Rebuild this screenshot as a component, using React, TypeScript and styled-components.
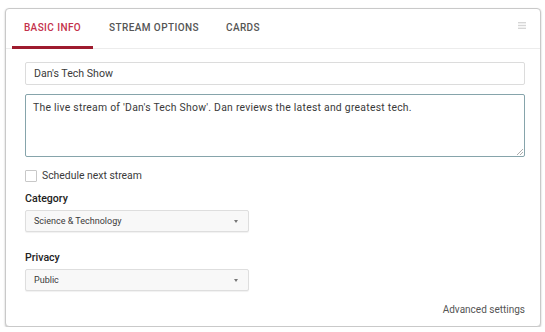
import styled, { createGlobalStyle } from "styled-components";

const GlobalStyle = createGlobalStyle`
  body {
    margin: 0;
    background: #ffffff;
    font-family: Roboto, "Liberation Sans", Arial, sans-serif;
  }
`;

const Card = styled.section`
  box-sizing: border-box;
  margin: 8px 4px 0 5px;
  width: 536px;
  height: 319px;
  border: 1px solid #c9c9c9;
  border-radius: 4px;
  box-shadow: 0 1px 2px rgba(0, 0, 0, 0.25);
  background: #ffffff;
  display: flex;
  flex-direction: column;
`;

const TabBar = styled.nav`
  height: 39px;
  display: flex;
  align-items: stretch;
  padding-left: 6px;
  padding-right: 14px;
  border-bottom: 1px solid #ececec;
`;

const Tab = styled.div<{ $active?: boolean; $width: number }>`
  width: ${(p) => p.$width}px;
  display: flex;
  align-items: center;
  justify-content: center;
  font-size: 10px;
  font-weight: 500;
  letter-spacing: 0.4px;
  color: ${(p) => (p.$active ? "#c4314b" : "#555")};
  border-bottom: 3px solid ${(p) => (p.$active ? "#9e1b2e" : "transparent")};
  margin-bottom: -1px;
`;

const Spacer = styled.div`
  flex: 1;
`;

const MenuIcon = styled.div`
  display: flex;
  align-items: center;
  padding-bottom: 6px;
`;

const Body = styled.div`
  flex: 1;
  display: flex;
  flex-direction: column;
  padding: 13px 15px 0 19px;
`;

const TextInput = styled.div`
  box-sizing: border-box;
  height: 23px;
  border: 1px solid #dcdcdc;
  border-radius: 2px;
  display: flex;
  align-items: center;
  padding-left: 8px;
  font-size: 10.6px;
  color: #3a3a3a;
`;

const TextArea = styled.div`
  position: relative;
  box-sizing: border-box;
  margin-top: 9px;
  height: 63px;
  border: 1px solid #86a4ab;
  border-radius: 2px;
  padding: 6px 7px;
  font-size: 10.4px;
  letter-spacing: 0.25px;
  color: #3a3a3a;
`;

const Grip = styled.svg`
  position: absolute;
  right: 1px;
  bottom: 1px;
`;

const CheckRow = styled.label`
  margin-top: 12px;
  display: flex;
  align-items: center;
  gap: 5px;
  font-size: 10.4px;
  color: #3a3a3a;
`;

const Box = styled.span`
  box-sizing: border-box;
  width: 12px;
  height: 12px;
  border: 1px solid #c8c8c8;
  border-radius: 1px;
`;

const FieldLabel = styled.div<{ $top: number }>`
  margin-top: ${(p) => p.$top}px;
  font-size: 10.6px;
  font-weight: 500;
  color: #222;
`;

const Select = styled.div`
  box-sizing: border-box;
  margin-top: 5px;
  width: 224px;
  height: 22px;
  border: 1px solid #dedede;
  border-radius: 2px;
  background: #f8f8f8;
  box-shadow: 0 1px 1px rgba(0, 0, 0, 0.06);
  display: flex;
  align-items: center;
  justify-content: space-between;
  padding: 0 10px 0 8px;
  font-size: 9px;
  color: #3a3a3a;
`;

const Arrow = styled.span`
  width: 0;
  height: 0;
  border-left: 2.5px solid transparent;
  border-right: 2.5px solid transparent;
  border-top: 3px solid #777;
`;

const Footer = styled.div`
  margin-top: auto;
  display: flex;
  justify-content: flex-end;
  padding: 0 0 11px 0;
  font-size: 10px;
  color: #555;
`;

export default function App() {
  return (
    <>
      <GlobalStyle />
      <Card>
        <TabBar>
          <Tab $active $width={81}>BASIC INFO</Tab>
          <Tab $width={122}>STREAM OPTIONS</Tab>
          <Tab $width={56}>CARDS</Tab>
          <Spacer />
          <MenuIcon>
            <svg width="8" height="7" viewBox="0 0 8 7">
              <rect x="0" y="0" width="8" height="1.4" fill="#d6d6d6" />
              <rect x="0" y="2.8" width="8" height="1.4" fill="#d6d6d6" />
              <rect x="0" y="5.6" width="8" height="1.4" fill="#d6d6d6" />
            </svg>
          </MenuIcon>
        </TabBar>
        <Body>
          <TextInput>Dan's Tech Show</TextInput>
          <TextArea>
            The live stream of 'Dan's Tech Show'. Dan reviews the latest and greatest tech.
            <Grip width="6" height="6" viewBox="0 0 6 6">
              <path d="M6 0 L0 6 M6 3 L3 6" stroke="#999" strokeWidth="0.8" />
            </Grip>
          </TextArea>
          <CheckRow>
            <Box />
            Schedule next stream
          </CheckRow>
          <FieldLabel $top={10}>Category</FieldLabel>
          <Select>
            Science &amp; Technology
            <Arrow />
          </Select>
          <FieldLabel $top={19}>Privacy</FieldLabel>
          <Select>
            Public
            <Arrow />
          </Select>
          <Footer>Advanced settings</Footer>
        </Body>
      </Card>
    </>
  );
}
